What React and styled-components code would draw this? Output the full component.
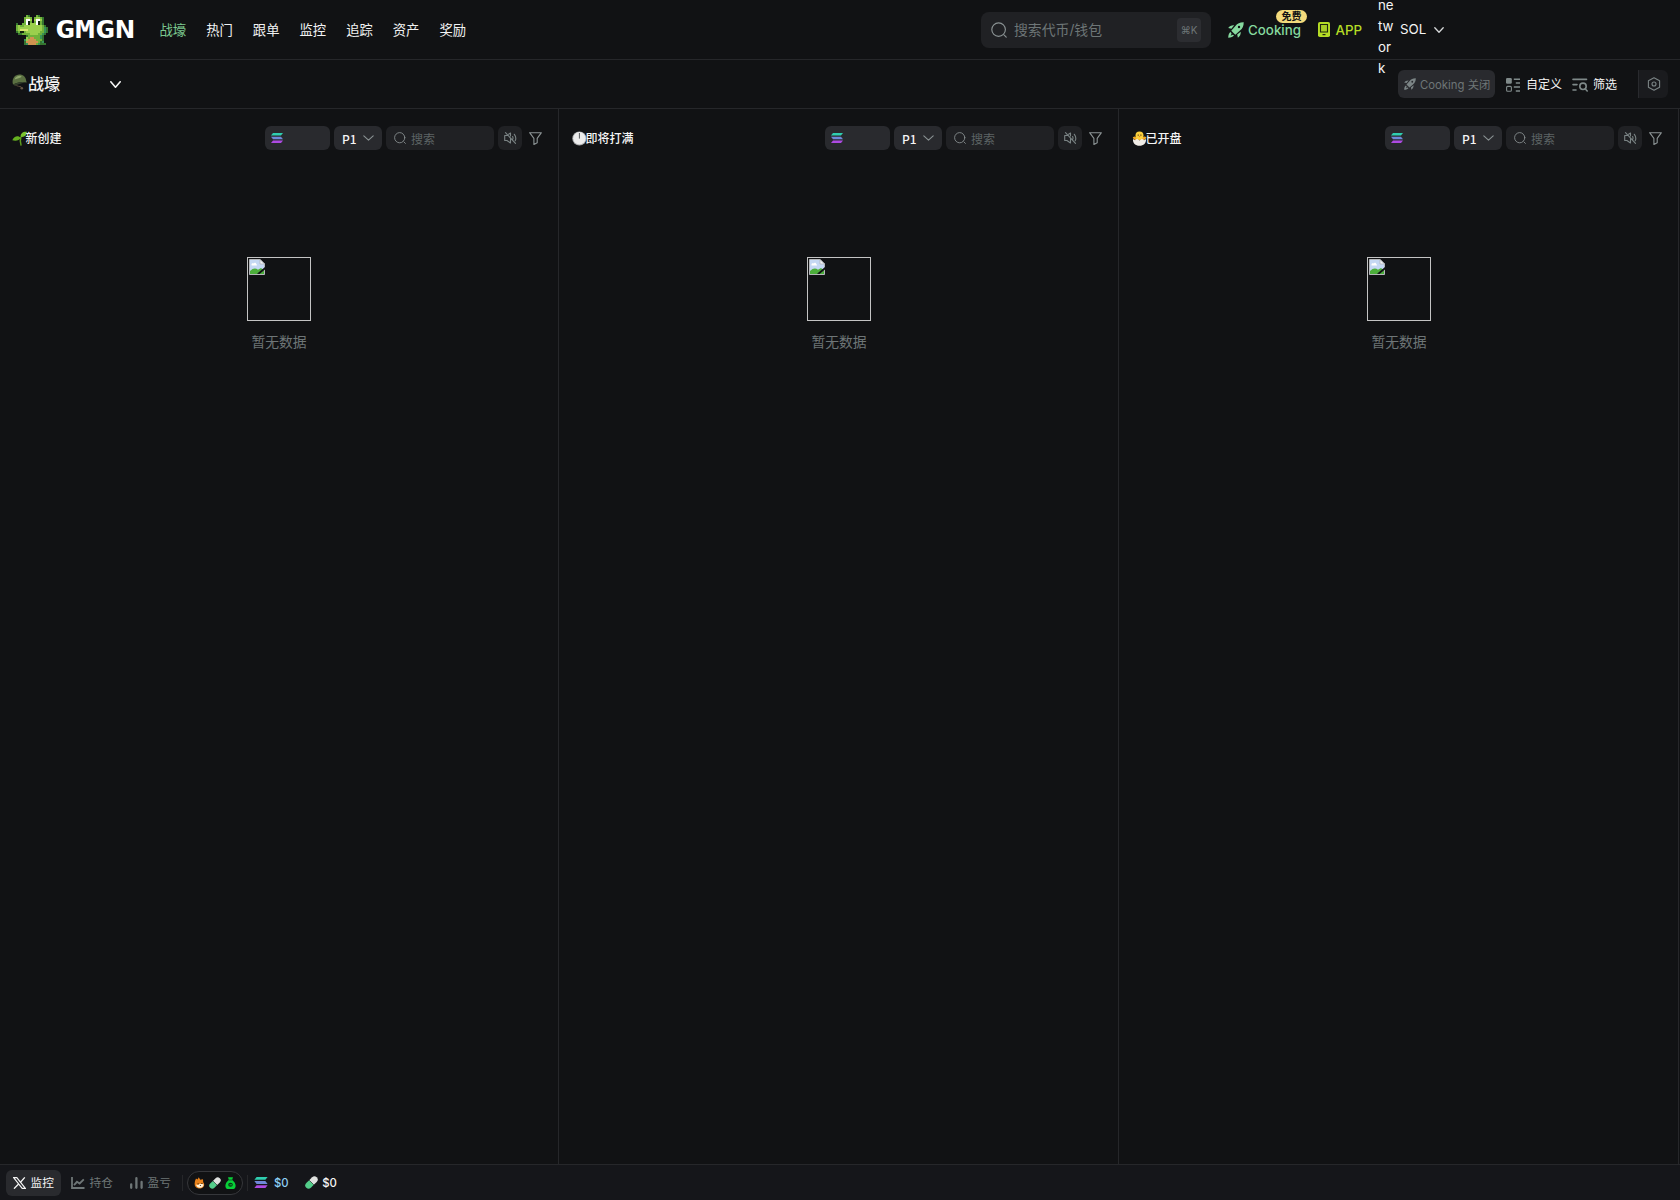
import React from "react";
import styled, { createGlobalStyle } from "styled-components";

const Global = createGlobalStyle`
  * { box-sizing: border-box; }
  body {
    margin: 0;
    background: #111214;
    color: #f5f5f5;
    font-family: Inter, "Noto Sans CJK SC", sans-serif;
    font-size: 14px;
  }
  svg { display: block; flex: none; }
`;

const Page = styled.div`
  display: flex;
  flex-direction: column;
  height: 1200px;
  width: 1680px;
  overflow: hidden;
`;

const Header = styled.header`
  display: flex;
  align-items: center;
  height: 60px;
  flex: none;
  padding-left: 16px;
  border-bottom: 1px solid #26272a;
`;

const Logo = styled.div`
  display: flex;
  align-items: center;
  gap: 7px;
  width: 143.5px;
  padding-top: 1px;
`;

const Nav = styled.nav`
  display: flex;
  gap: 20px;
  flex: 1;
`;

const NavLink = styled.a`
  font-size: 13.333px;
  line-height: 20px;
  color: ${(p) => (p.$active ? "#7cc98f" : "#f1f2f3")};
`;

const SearchBox = styled.div`
  display: flex;
  align-items: center;
  width: 230px;
  height: 36px;
  padding: 0 10px;
  border-radius: 8px;
  background: #202124;
  color: #6e7677;
`;

const SearchHint = styled.span`
  flex: 1;
  padding-left: 7px;
  font-size: 13.85px;
  line-height: 20px;
`;

const Kbd = styled.span`
  width: 24px;
  height: 24px;
  border-radius: 4px;
  background: #2c2d31;
  font-size: 10px;
  line-height: 24px;
  text-align: center;
`;

const TopLink = styled.div`
  position: relative;
  display: flex;
  align-items: center;
  gap: ${(p) => p.$gap}px;
  width: ${(p) => p.$w}px;
  margin-left: ${(p) => p.$ml}px;
  color: ${(p) => p.$color};
  font-size: 13.333px;
  line-height: 20px;
  font-weight: 450;
  white-space: nowrap;
`;

const Badge = styled.span`
  position: absolute;
  left: 48px;
  top: -10px;
  width: 31px;
  height: 13px;
  border-radius: 7px;
  background: #f3da7c;
  color: #111214;
  font-size: 10px;
  line-height: 13px;
  font-weight: 600;
  text-align: center;
`;

const Chain = styled.div`
  display: flex;
  align-items: center;
  width: 318px;
  padding-left: 16px;
  font-size: 13.333px;
  line-height: 21px;
`;

const ChainAlt = styled.span`
  width: 16px;
  height: 84px;
  margin: 15px 6px 0 0;
  word-break: break-all;
`;

const ChainName = styled.span`
  width: 26px;
  margin-right: 8px;
`;

const SubBar = styled.div`
  display: flex;
  align-items: center;
  height: 49px;
  flex: none;
  padding: 0 12px;
  border-bottom: 1px solid #26272a;
`;

const PageTitle = styled.div`
  display: flex;
  align-items: center;
  gap: 0;
  width: 98px;
  padding-bottom: 1px;
  font-size: 16px;
  line-height: 24px;
  font-weight: 500;
`;

const TitleIcon = styled.span`
  flex: none;
  width: ${(p) => p.$w}px;
  padding-bottom: ${(p) => p.$lift || 0}px;
`;

const Actions = styled.div`
  display: flex;
  align-items: center;
  margin-left: auto;
`;

const CookingToggle = styled.div`
  display: flex;
  align-items: center;
  gap: 4px;
  width: 97px;
  height: 28px;
  padding-left: 6px;
  border-radius: 6px;
  background: #292a2e;
  color: #6e7677;
  font-size: 11.35px;
  white-space: nowrap;
`;

const Action = styled.div`
  display: flex;
  align-items: center;
  gap: ${(p) => p.$gap}px;
  margin-left: ${(p) => p.$ml}px;
  padding-top: 1px;
  font-size: 12px;
  line-height: 18px;
  color: #f5f5f5;
`;

const SettingsButton = styled.div`
  display: flex;
  align-items: center;
  justify-content: center;
  width: 30px;
  height: 28px;
  margin-left: 21px;
  border-left: 1px solid #292a2e;
  border-radius: 0 6px 6px 0;
  background: #1a1b1e;
`;

const Columns = styled.main`
  display: flex;
  flex: 1;
`;

const Column = styled.section`
  width: ${(p) => p.$w}px;
  border-right: 1px solid #26272a;
  padding-left: ${(p) => p.$pl}px;
`;

const ColumnHead = styled.div`
  display: flex;
  align-items: center;
  gap: 4px;
  height: 24px;
  margin-top: 17px;
  padding-right: 12px;
`;

const ColumnTitle = styled.div`
  display: flex;
  align-items: center;
  flex: 1;
  padding-top: 2px;
  font-size: 12px;
  line-height: 18px;
  font-weight: 500;
`;

const Chip = styled.div`
  display: flex;
  align-items: center;
  gap: ${(p) => p.$gap || 0}px;
  width: ${(p) => p.$w}px;
  height: 24px;
  padding-left: ${(p) => p.$pl}px;
  border-radius: 6px;
  background: ${(p) => (p.$dim ? "#202124" : "#292a2e")};
  color: ${(p) => (p.$dim ? "#5d6465" : "#f5f5f5")};
  font-size: 12px;
  font-weight: ${(p) => (p.$dim ? 400 : 500)};
  font-family: "Noto Sans CJK SC", sans-serif;
  line-height: 18px;
`;

const ChipLabel = styled.span`
  padding-top: 1px;
`;

const FilterSlot = styled.div`
  padding-left: 3px;
  width: 20px;
`;

const Empty = styled.div`
  display: flex;
  flex-direction: column;
  align-items: center;
  gap: 11px;
  width: 534px;
  padding-top: 107px;
  color: #6e7677;
  font-size: 13.8px;
  line-height: 20px;
`;

const ImageBox = styled.div`
  width: 64px;
  height: 64px;
  padding: 1px;
  border: 1px solid #c4c4c4;
`;

const Footer = styled.footer`
  display: flex;
  align-items: center;
  height: 36px;
  flex: none;
  padding: 0 6px;
  border-top: 1px solid #26272a;
  background: #15161a;
`;

const Tab = styled.div`
  display: flex;
  align-items: center;
  gap: 4.5px;
  width: ${(p) => p.$w}px;
  height: 26px;
  padding-left: ${(p) => p.$pl}px;
  border-radius: 6px;
  background: ${(p) => (p.$active ? "#292a2e" : "transparent")};
  color: ${(p) => (p.$active ? "#f5f5f5" : "#6e7677")};
  font-size: 11.7px;
  line-height: 18px;
`;

const Separator = styled.span`
  width: 1px;
  height: 16px;
  background: #26272a;
`;

const Pill = styled.div`
  display: flex;
  align-items: center;
  justify-content: center;
  gap: 4px;
  width: 56px;
  height: 24px;
  margin: 0 4px;
  border: 1px solid #36373b;
  border-radius: 12px;
  background: #111214;
`;

const Price = styled.div`
  display: flex;
  align-items: center;
  gap: ${(p) => p.$gap}px;
  margin-left: ${(p) => p.$ml}px;
  color: ${(p) => p.$color};
  font-size: 11.35px;
  font-weight: 500;
`;

const CROC = [
  ".....ag...ag....",
  "....abba.abbag..",
  "....aWWb.bWWbg..",
  "....aWKa.aWKag..",
  "g..aaWKbbbWKag..",
  "abaabbbbbbbbbag.",
  "abbbbbbbbbbbbaDg",
  "abyyyybbbbbbbaDg",
  "gaKKabbbbbbbaaDg",
  ".ggaaaabbbbaaDg.",
  ".....gaaaaaaDg..",
  ".....baooaaaDg..",
  "....Dbooooaaag..",
  "....gooooooagD..",
  "....gDooooaDggg.",
];
const CROC_COLORS = {
  a: "#6fb23a", b: "#9bcf4d", g: "#35752f", D: "#38935a",
  W: "#ffffff", K: "#14240f", y: "#d7e86e", o: "#cf9450",
};

const Croc = () => (
  <svg width="32" height="30" viewBox="0 0 16 15" shapeRendering="crispEdges">
    {CROC.flatMap((row, y) =>
      [...row].map((c, x) =>
        c === "." ? null : (
          <rect key={`${x}-${y}`} x={x} y={y} width="1" height="1" fill={CROC_COLORS[c]} />
        )
      )
    )}
  </svg>
);

const Wordmark = () => (
  <svg width="82" height="30" viewBox="0 0 82 30" overflow="visible">
    <text
      x="0" y="22.500" fill="#fff"
      fontFamily="'DejaVu Sans Mono', monospace" fontWeight="700" fontSize="24.500"
      textLength="80" lengthAdjust="spacingAndGlyphs"
    >
      GMGN
    </text>
  </svg>
);

const Magnifier = ({ size, color = "#8a9293" }) => (
  <svg width={size} height={size} viewBox="0 0 16 16" fill="none" stroke={color} strokeWidth="1.15" strokeLinecap="round">
    <circle cx="7.6" cy="7.6" r="6.8" />
    <path d="M13.2 13.2l2 2" />
  </svg>
);

const Rocket = ({ size, color }) => (
  <svg width={size} height={size} viewBox="0 0 16 16" fill={color}>
    <path
      fillRule="evenodd"
      d="M15.700.3C12 .2 9.500 1.400 7.400 4L3.300 8.700l4 4L12 8.600c2.600-2.100 3.800-4.600 3.700-8.300zM11 3.800a1.200 1.200 0 1 1 0 2.400 1.200 1.200 0 0 1 0-2.400z"
    />
    <path d="M6.200 3.300C3.700 3.100 1.600 4 .2 6.100l3.200.7zM12.700 9.800c.2 2.500-.7 4.600-2.800 6l-.7-3.200zM2.700 10c-1.600.8-2.400 2.800-2.500 5.800 3-.1 5-.9 5.800-2.500l-1.300-.5-2.100 1 1-2.100z" />
  </svg>
);

const Phone = () => (
  <svg width="12" height="15" viewBox="0 0 12 15">
    <rect width="12" height="15" rx="1.800" fill="#b5dc25" />
    <path d="M2.500 2.500h7v7.500h-7z" fill="#a9cd27" stroke="#20260f" strokeWidth="1.100" />
    <path d="M4.500 12h3v1.200h-3z" fill="#20260f" />
  </svg>
);

const Chevron = ({ w, h, color, sw = 1.4 }) => (
  <svg width={w} height={h} viewBox={`0 0 ${w} ${h}`} fill="none" stroke={color} strokeWidth={sw} strokeLinecap="round" strokeLinejoin="round">
    <path d={`M.8.8L${w / 2} ${h - 0.8}L${w - 0.8}.8`} />
  </svg>
);

const Helmet = () => (
  <svg width="15" height="16" viewBox="0 0 15 16">
    <path d="M1.500 9.500c1.500 1.500 4 3 7.500 3.200l.8 2.300" fill="none" stroke="#55483a" strokeWidth="1" />
    <path d="M.6 8.500C.3 4 3.300.7 7.300.6c3.900-.1 6.600 2.600 6.900 6.400l.6 1.500C10 7.300 5.500 8.300 1 10.500z" fill="#5b7042" />
    <path d="M2.500 5.500C3.500 3 5.500 1.700 8 1.800c1.500.1 2 .8 1 1.400C7 4.200 4.500 4.500 2.500 5.500z" fill="#8ea56b" />
    <path d="M1 10.500C5.500 8.300 10 7.300 14.800 8.500c-3.500.2-8 1.400-12 3.300z" fill="#36422c" />
    <circle cx="9.800" cy="14.300" r="1.300" fill="#665645" />
  </svg>
);

const Seedling = () => (
  <svg width="15" height="15" viewBox="0 0 15 15">
    <path d="M8.800 6.500c-.8 2.500-.6 5 .2 7.500" fill="none" stroke="#5b9a1d" strokeWidth="1.500" strokeLinecap="round" />
    <path d="M8.800 6.800C6.500 4.200 2 4.800.3 9.200 3.800 10.200 7.300 9.500 8.800 6.800z" fill="#66b120" />
    <path d="M8.600 5.800C8.300 2.500 11 .3 14.800.8c.1 3.300-2.500 6-6.200 5z" fill="#79c22c" />
  </svg>
);

const Clock = () => (
  <svg width="15" height="15" viewBox="0 0 15 15">
    <circle cx="7.400" cy="7.500" r="7.100" fill="#a9abad" />
    <circle cx="7.400" cy="7.300" r="6.200" fill="#ececec" />
    <path d="M7.400 2v5.600" stroke="#55585b" strokeWidth="1" />
  </svg>
);

const Chick = () => (
  <svg width="15" height="15" viewBox="0 0 15 15">
    <path d="M.8 6.200C2.500 5.300 3.500 5.500 4 6.200h7c.8-.9 2-1 3.400 0-.5 2-2 3-4 3H4.500C2.500 9 1.200 8 .8 6.200z" fill="#f1a824" />
    <circle cx="7.500" cy="4.500" r="4" fill="#fbd03c" />
    <path d="M5.700 3.400h1v1.300h-1zM8.400 3.400h1v1.300h-1z" fill="#4a3412" />
    <path d="M6.700 5h1.800l-.9 1.500z" fill="#ee7f1e" />
    <path d="M1 8l2 1.300L5 7.800l2.500 1.600L10 7.800l2 1.500L14 8c.5 4-2.500 6.800-6.500 6.800S.5 12 1 8z" fill="#f0ece6" />
  </svg>
);

const CustomIcon = () => (
  <svg width="14" height="14" viewBox="0 0 14 14">
    <rect width="5.800" height="5.800" rx="1.200" fill="#7f8989" />
    <rect x=".6" y="8.400" width="4.800" height="4.800" rx="1" fill="none" stroke="#7f8989" strokeWidth="1.100" />
    <path d="M7.800 1.200H14M9.800 5.100H14M7.800 9.100H14M9.800 13H14" stroke="#7f8989" strokeWidth="1.500" />
  </svg>
);

const ListSearchIcon = () => (
  <svg width="16" height="14" viewBox="0 0 16 14" fill="none" stroke="#7f8989" strokeWidth="1.600" strokeLinecap="round">
    <path d="M1 1.400h13.500M1 6.600h4M1 12h3M13.400 11l1.800 2" />
    <circle cx="11" cy="8.300" r="3.200" />
  </svg>
);

const HexIcon = () => (
  <svg width="14" height="14" viewBox="0 0 14 14" fill="none" stroke="#7b8485" strokeWidth="1.100" strokeLinejoin="round">
    <path d="M7 .7l5.600 3.100v6.400L7 13.300l-5.600-3.100V3.800z" />
    <circle cx="7" cy="7" r="2" />
  </svg>
);

const SolIcon = ({ w, h }) => (
  <svg width={w} height={h} viewBox="0 0 12 10">
    <path d="M2 0h10l-2 2.600H0z" fill="#2fceb0" />
    <path d="M0 3.700h10l2 2.600H2z" fill="#6f87d8" />
    <path d="M2 7.400h10L10 10H0z" fill="#ad4ae3" />
  </svg>
);

const MutedIcon = () => (
  <svg width="13" height="12" viewBox="0 0 13 12" fill="none" stroke="#7b8485" strokeWidth="1.100" strokeLinecap="round" strokeLinejoin="round">
    <path d="M3.200 3.500H.7v5h2.200L6.500 11V6.800M4.600 2.200L6.500 1v3M8.600 4.500c.5.900.5 1.900.1 2.800M10.300 2.300c1.600 2 1.900 4.300.9 6.400M1.500.7l10 10.600" />
  </svg>
);

const FunnelIcon = () => (
  <svg width="13" height="13" viewBox="0 0 13 13" fill="none" stroke="#8c9495" strokeWidth="1.100" strokeLinejoin="round">
    <path d="M.6.700h11.800L8.200 6.400v4.300l-3.300 1.700v-6z" />
  </svg>
);

const MissingImage = () => (
  <svg width="16" height="16" viewBox="0 0 16 16">
    <path d="M.5.500H11L15.500 5v10.500H.5z" fill="#c5d8f4" stroke="#b4b6ba" />
    <path d="M2.500 5.500c.2-1.300 1.300-1.600 2-.9.700-1.300 2.700-.9 2.800.6.900.1 1 .9.400 1.300H3c-.5 0-.7-.6-.5-1z" fill="#fff" />
    <path d="M1 15V12c3-2.800 5.500-3.200 8-1.200L12 9l3 2.500V15z" fill="#4cae3b" />
    <path d="M8 14.800L16 8v2.600L10.500 15z" fill="#111214" />
    <path d="M11 .5V5h4.500z" fill="#f3f5f8" stroke="#b4b6ba" strokeWidth=".8" />
  </svg>
);

const XIcon = () => (
  <svg width="13" height="12" viewBox="0 0 13 12">
    <path d="M.6.600h3.200l8.600 10.800H9.200z" fill="none" stroke="#f5f5f5" strokeWidth="1.200" />
    <path d="M11.800.4L7.300 5.500M5.600 7L1 11.700" stroke="#f5f5f5" strokeWidth="1.300" />
  </svg>
);

const LineChart = () => (
  <svg width="14" height="12" viewBox="0 0 14 12" fill="none" stroke="#6e7677" strokeWidth="1.800">
    <path d="M1 0v11h12.500M3 8.200l3-3.400 2.600 1.700 4.200-4.200" />
  </svg>
);

const Bars = () => (
  <svg width="13" height="12" viewBox="0 0 13 12" fill="none" stroke="#6e7677" strokeWidth="2.300" strokeLinecap="round">
    <path d="M1.200 7.300v3.500M6.400 1.200v9.600M11.600 5v5.800" />
  </svg>
);

const Capsule = ({ size }) => (
  <svg width={size} height={size} viewBox="0 0 12 12">
    <g transform="rotate(-45 6 6)">
      <path d="M6 3H2.200a3 3 0 0 0 0 6H6z" fill="#53cd8a" />
      <path d="M6 3h3.800a3 3 0 0 1 0 6H6z" fill="#dfe1df" />
      <path d="M6 3v6" stroke="#294335" strokeWidth=".6" />
    </g>
  </svg>
);

const Dog = () => (
  <svg width="11" height="12" viewBox="0 0 11 12">
    <path d="M1 4L2 1.500l1.500 1L4.800.2l1.400 2.600L9 2.200l.2 3c1.200 1.300 1.300 3.100.5 4.300C8.700 11 6.800 11.700 4.800 11.500 2.300 11.200.4 9.500.6 6.800z" fill="#e9821b" />
    <path d="M2.200 7.500l1.800.4 2-1.200 3.500.5c.3 2.200-1.500 3.700-3.700 3.600C3.600 10.700 2.100 9.500 2.200 7.500z" fill="#fff4dd" />
    <path d="M3.600 6.200h1v1h-1zM7.400 5.900h1v1h-1zM5.900 8H7v.8H5.900z" fill="#32210e" />
  </svg>
);

const MoneyBag = () => (
  <svg width="11" height="12" viewBox="0 0 11 12">
    <path d="M3 .2h5L7.200 2.700l2.600 3C11.500 9 10.300 12 8.500 12h-6C.7 12-.5 9 1.200 5.700l2.600-3z" fill="#08cf38" />
    <path d="M3.400 3h4.200" stroke="#0a5121" strokeWidth=".8" />
    <ellipse cx="5.500" cy="7.800" rx="2.300" ry="2" fill="#0a3015" />
    <path d="M4.500 7.800h2.500" stroke="#08cf38" strokeWidth=".9" />
  </svg>
);

const NAV = ["战壕", "热门", "跟单", "监控", "追踪", "资产", "奖励"];
const COLUMNS = [
  { Icon: Seedling, title: "新创建", w: 559, pl: 12 },
  { Icon: Clock, title: "即将打满", w: 560, pl: 13 },
  { Icon: Chick, title: "已开盘", w: 560, pl: 13 },
];

export default function App() {
  return (
    <>
      <Global />
      <Page>
        <Header>
          <Logo>
            <Croc />
            <Wordmark />
          </Logo>
          <Nav>
            {NAV.map((label, i) => (
              <NavLink key={label} $active={i === 0}>{label}</NavLink>
            ))}
          </Nav>
          <SearchBox>
            <Magnifier size={16} />
            <SearchHint>搜索代币/钱包</SearchHint>
            <Kbd>⌘K</Kbd>
          </SearchBox>
          <TopLink $ml={17} $w={72} $gap={4} $color="#86d99f">
            <Rocket size={16} color="#86d99f" />
            Cooking
            <Badge>免费</Badge>
          </TopLink>
          <TopLink $ml={18} $w={44} $gap={5.5} $color="#b5dc25">
            <Phone />
            APP
          </TopLink>
          <Chain>
            <ChainAlt>network</ChainAlt>
            <ChainName>SOL</ChainName>
            <Chevron w={10} h={6} color="#d8dadb" sw={1.3} />
          </Chain>
        </Header>

        <SubBar>
          <PageTitle>
            <TitleIcon $w={16} $lift={3}>
              <Helmet />
            </TitleIcon>
            战壕
          </PageTitle>
          <Chevron w={11} h={7} color="#f5f5f5" sw={1.6} />
          <Actions>
            <CookingToggle>
              <Rocket size={12} color="#7b8485" />
              Cooking 关闭
            </CookingToggle>
            <Action $ml={11} $gap={6}>
              <CustomIcon />
              自定义
            </Action>
            <Action $ml={10} $gap={5}>
              <ListSearchIcon />
              筛选
            </Action>
            <SettingsButton>
              <HexIcon />
            </SettingsButton>
          </Actions>
        </SubBar>

        <Columns>
          {COLUMNS.map(({ Icon, title, w, pl }) => (
            <Column key={title} $w={w} $pl={pl}>
              <ColumnHead>
                <ColumnTitle>
                  <TitleIcon $w={13.5} $lift={1}>
                    <Icon />
                  </TitleIcon>
                  {title}
                </ColumnTitle>
                <Chip $w={65} $pl={6}>
                  <SolIcon w={12} h={10} />
                </Chip>
                <Chip $w={48} $pl={8} $gap={6}>
                  <ChipLabel>P1</ChipLabel>
                  <Chevron w={11} h={6} color="#8a9293" sw={1.1} />
                </Chip>
                <Chip $w={108} $pl={8} $gap={5} $dim>
                  <Magnifier size={12} />
                  <ChipLabel>搜索</ChipLabel>
                </Chip>
                <Chip $w={24} $pl={6} $dim>
                  <MutedIcon />
                </Chip>
                <FilterSlot>
                  <FunnelIcon />
                </FilterSlot>
              </ColumnHead>
              <Empty>
                <ImageBox>
                  <MissingImage />
                </ImageBox>
                暂无数据
              </Empty>
            </Column>
          ))}
        </Columns>

        <Footer>
          <Tab $active $w={55} $pl={7}>
            <XIcon />
            监控
          </Tab>
          <Tab $w={59} $pl={10}>
            <LineChart />
            持仓
          </Tab>
          <Tab $w={62} $pl={10}>
            <Bars />
            盈亏
          </Tab>
          <Separator />
          <Pill>
            <Dog />
            <Capsule size={12} />
            <MoneyBag />
          </Pill>
          <Separator />
          <Price $ml={6} $gap={6} $color="#8fd0f5">
            <SolIcon w={14} h={11} />
            $0
          </Price>
          <Price $ml={16} $gap={4.5} $color="#f5f5f5">
            <Capsule size={13} />
            $0
          </Price>
        </Footer>
      </Page>
    </>
  );
}
